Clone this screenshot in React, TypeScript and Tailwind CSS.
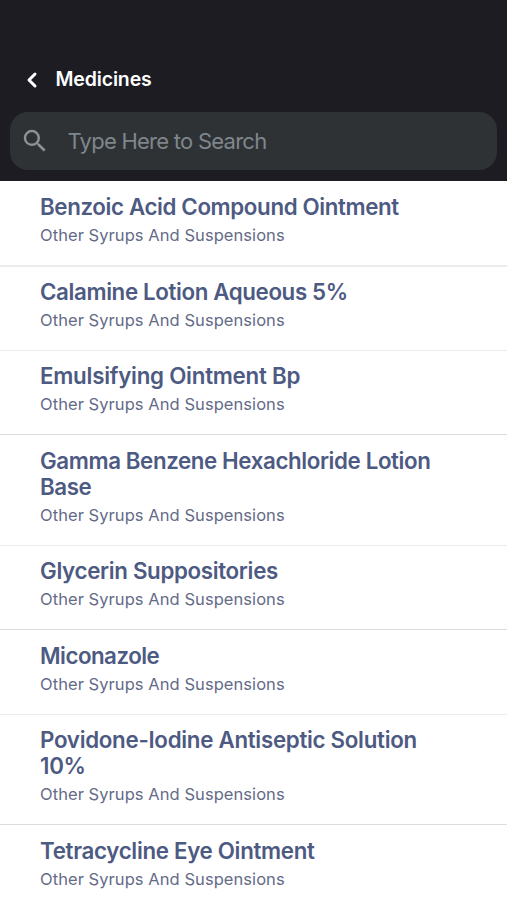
import { ChevronLeft } from "lucide-react";
import { MdSearch } from "react-icons/md";

const medicines = [
  { name: "Benzoic Acid Compound Ointment", tracking: "tracking-[-0.36px]", row: "pt-[13px] pb-[18px] border-b-2 border-[#ececec]" },
  { name: "Calamine Lotion Aqueous 5%", tracking: "tracking-[-0.36px]", row: "pt-[12px] pb-[18px] border-b border-[#ebebeb]" },
  { name: "Emulsifying Ointment Bp", tracking: "tracking-[-0.23px]", row: "pt-[12px] pb-[18px] border-b border-[#dcdcdc]" },
  { name: "Gamma Benzene Hexachloride Lotion Base", tracking: "tracking-[-0.38px]", row: "pt-[13px] pb-[18px] border-b border-[#ebebeb]" },
  { name: "Glycerin Suppositories", tracking: "tracking-[-0.32px]", row: "pt-[12px] pb-[18px] border-b border-[#dcdcdc]" },
  { name: "Miconazole", tracking: "tracking-[-0.5px]", row: "pt-[13px] pb-[18px] border-b border-[#ebebeb]" },
  { name: "Povidone-Iodine Antiseptic Solution 10%", tracking: "tracking-[-0.28px]", row: "pt-[12px] pb-[18px] border-b border-[#dcdcdc]" },
  { name: "Tetracycline Eye Ointment", tracking: "tracking-[-0.3px]", row: "pt-[13px] pb-[18px] border-b border-[#ebebeb]" },
];

function App() {
  return (
    <div className="flex h-[900px] w-[507px] flex-col overflow-hidden bg-white font-['Inter',sans-serif]">
      <header className="h-[181px] shrink-0 bg-[#1d1c23] px-[10px] pt-[63px]">
        <div className="flex h-[34px] items-center">
          <ChevronLeft className="ml-[10px] size-6 text-white" strokeWidth={3} />
          <h1 className="ml-[11.5px] text-[19.5px] font-semibold tracking-[-0.15px] text-white">Medicines</h1>
        </div>
        <div className="mt-[15px] flex h-[58px] items-center rounded-[18px] bg-[#2e3235] pl-[10px]">
          <MdSearch className="size-[30px] text-[#8d9297]" />
          <span className="ml-[17.5px] text-[22px] tracking-[-0.75px] text-[#7f868c]">Type Here to Search</span>
        </div>
      </header>
      <ul>
        {medicines.map((item) => (
          <li key={item.name} className={`pl-10 ${item.row}`}>
            <h2 className={`w-[400px] text-[22.3px] leading-[26px] font-semibold text-[#4d5a82] ${item.tracking}`}>{item.name}</h2>
            <p className="mt-[4px] text-[16.5px] leading-[23px] tracking-[0.06px] text-[#646b88]">Other Syrups And Suspensions</p>
          </li>
        ))}
      </ul>
    </div>
  );
}

export default App;
